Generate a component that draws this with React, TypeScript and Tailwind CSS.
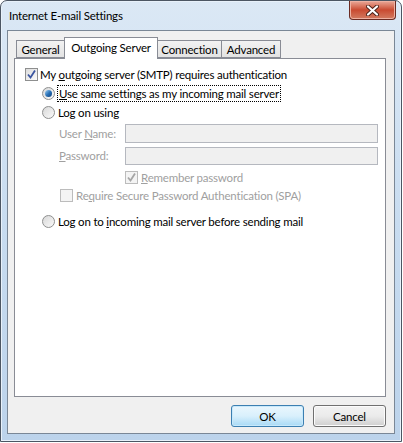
import React from 'react';

const Check = ({ checked, disabled }: { checked?: boolean; disabled?: boolean }) => (
  <span
    className={`flex h-[13px] w-[13px] shrink-0 items-center justify-center border ${
      disabled ? 'border-[#bcbcbc] bg-[#f4f4f4]' : 'border-[#8e8f8f] bg-gradient-to-br from-[#dcdcdc] to-[#fbfbfb]'
    }`}
  >
    {checked && (
      <svg width="11" height="11" viewBox="0 0 11 11">
        <path
          d="M2 5.5 L4.5 8.5 L9 1.5"
          fill="none"
          stroke={disabled ? '#a6a6a6' : '#3a55a0'}
          strokeWidth="1.8"
        />
      </svg>
    )}
  </span>
);

const Radio = ({ checked }: { checked?: boolean }) => (
  <span className="flex h-[13px] w-[13px] shrink-0 items-center justify-center rounded-full border border-[#8e8f8f] bg-gradient-to-br from-[#d8d8d8] to-[#fafafa]">
    {checked && (
      <span className="h-[7px] w-[7px] rounded-full bg-gradient-to-br from-[#9fd2f3] via-[#2a73b8] to-[#0e3f7a]" />
    )}
  </span>
);

const tabs = ['General', 'Outgoing Server', 'Connection', 'Advanced'];

export default function App() {
  return (
    <div
      className="relative h-[443px] w-[403px] overflow-hidden whitespace-nowrap bg-white text-[11.5px] leading-[15px] tracking-[-0.2px] text-black"
      style={{ fontFamily: 'Lato, "Noto Sans", sans-serif' }}
    >
      <div className="flex h-[442px] w-[402px] flex-col rounded-t-[7px] border border-[#4c5663] bg-gradient-to-b from-[#dbe8f5] via-[#c8dcf0] to-[#bcd3eb] px-[6px] pb-[7px] shadow-[inset_0_0_0_1px_#e8f1fa]">
        {/* title bar */}
        <div className="flex h-[29px] items-start justify-between">
          <div className="pl-[2px] pt-[7px] text-black">Internet E-mail Settings</div>
          <div className="mr-[-1px] flex h-[19px] w-[47px] items-center justify-center rounded-b-[4px] border border-t-0 border-[#6b2b22] bg-gradient-to-b from-[#e9a999] via-[#c94a31] to-[#d27a60] shadow-[inset_0_0_0_1px_#eeb1a2]">
            <svg width="13" height="11" viewBox="0 0 13 11">
              <path d="M2 1.5 L11 9.5 M11 1.5 L2 9.5" stroke="#4a2219" strokeWidth="4" strokeLinecap="round" />
              <path d="M2 1.5 L11 9.5 M11 1.5 L2 9.5" stroke="#ffffff" strokeWidth="2.2" strokeLinecap="round" />
            </svg>
          </div>
        </div>
        {/* client area */}
        <div className="flex flex-1 flex-col border border-[#7a8796] bg-[#f0f0f0] pl-[6px] pr-[8px]">
          <div className="mt-[6px] flex h-[21px] items-end pl-[2px]">
            {tabs.map((t) =>
              t === 'Outgoing Server' ? (
                <div
                  key={t}
                  className="relative z-10 mb-[-1px] flex h-[22px] w-[94px] items-start justify-center border border-b-0 border-[#898c95] bg-white pt-[2px]"
                >
                  {t}
                </div>
              ) : (
                <div
                  key={t}
                  className={`flex h-[18px] items-center justify-center border border-[#898c95] bg-gradient-to-b from-[#f2f2f2] to-[#e3e3e3] ${
                    t === 'General' ? 'w-[48px] border-r-0' : t === 'Connection' ? 'w-[64px] border-l-0' : 'w-[59px] border-l-0'
                  }`}
                >
                  {t}
                </div>
              )
            )}
          </div>
          <div className="h-[339px] border border-[#898c95] bg-white pl-[10px] pt-[6px]">
            <div className="flex h-[19px] items-center">
              <Check checked />
              <span className="ml-[2px]">
                My <u>o</u>utgoing server (SMTP) requires authentication
              </span>
            </div>
            <div className="flex h-[19px] items-center pl-[17px]">
              <Radio checked />
              <span className="ml-[2px] border border-dotted border-black px-[1px] leading-[15px]">
                <u>U</u>se same settings as my incoming mail server
              </span>
            </div>
            <div className="flex h-[19px] items-center pl-[17px]">
              <Radio />
              <span className="ml-[3px]">Log on using</span>
            </div>
            <div className="mt-[2px] flex h-[19px] items-center pl-[34px] text-[#a0a0a0]">
              <span className="w-[66px]">
                User <u>N</u>ame:
              </span>
              <div className="h-[19px] w-[253px] border border-[#b5b8bf] bg-[#f0f0f0]" />
            </div>
            <div className="mt-[3px] flex h-[19px] items-center pl-[34px] text-[#a0a0a0]">
              <span className="w-[66px]">
                <u>P</u>assword:
              </span>
              <div className="h-[18px] w-[253px] border border-[#b5b8bf] bg-[#f0f0f0]" />
            </div>
            <div className="mt-[3px] flex h-[19px] items-center pl-[100px] text-[#a0a0a0]">
              <Check checked disabled />
              <span className="ml-[3px]">
                <u>R</u>emember password
              </span>
            </div>
            <div className="flex h-[17px] items-center pl-[35px] text-[#a0a0a0]">
              <Check disabled />
              <span className="ml-[3px]">
                Re<u>q</u>uire Secure Password Authentication (SPA)
              </span>
            </div>
            <div className="mt-[8px] flex h-[19px] items-center pl-[17px]">
              <Radio />
              <span className="ml-[3px]">
                Log on to <u>i</u>ncoming mail server before sending mail
              </span>
            </div>
          </div>
          <div className="mt-[8px] flex justify-end gap-[9px]">
            <button className="h-[22px] w-[73px] rounded-[3px] border border-[#3c7fb1] bg-gradient-to-b from-[#eaf6fd] via-[#d9f0fc] to-[#a7d9f5] shadow-[inset_0_0_0_1px_#c8e9fb]">
              OK
            </button>
            <button className="h-[22px] w-[73px] rounded-[3px] border border-[#707070] bg-gradient-to-b from-[#f2f2f2] via-[#ebebeb] to-[#cfcfcf] shadow-[inset_0_0_0_1px_#fcfcfc]">
              Cancel
            </button>
          </div>
        </div>
      </div>
    </div>
  );
}
